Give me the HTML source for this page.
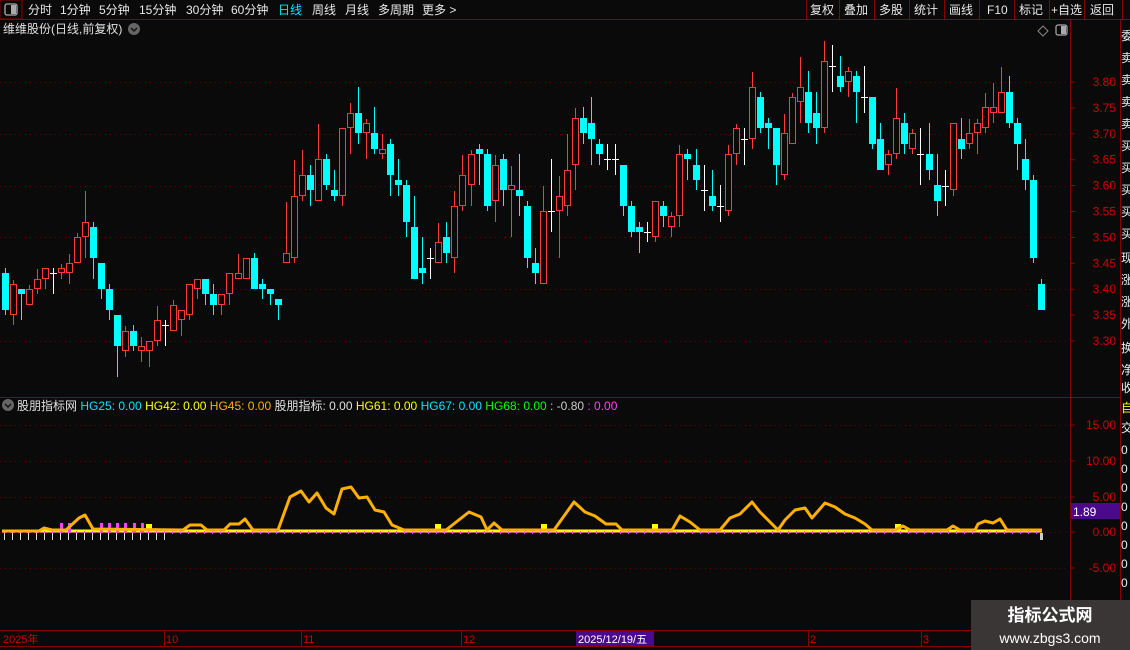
<!DOCTYPE html>
<html><head><meta charset="utf-8">
<style>
html,body{margin:0;padding:0;background:#0a0a0a;width:1130px;height:650px;overflow:hidden;font-family:"Liberation Sans","Noto Sans CJK SC",sans-serif;}
svg{position:absolute;left:0;top:0}
text{font-family:"Liberation Sans","Noto Sans CJK SC",sans-serif}
</style></head><body>
<svg id="s" width="1130" height="650" xmlns="http://www.w3.org/2000/svg">
<rect width="1130" height="650" fill="#0a0a0a"/>
<!-- top bar -->
<line x1="0" y1="19.5" x2="1130" y2="19.5" stroke="#8b0000"/>
<rect x="0" y="0" width="22" height="19" fill="none" stroke="#8b0000"/>
<rect x="5" y="4" width="12" height="11" rx="2" fill="none" stroke="#aaa" stroke-width="1.3"/>
<rect x="11" y="5" width="5" height="9" fill="#aaa"/>
<g font-size="12" fill="#e8e8e8">
<text x="28" y="14">分时</text><text x="60" y="14">1分钟</text><text x="99" y="14">5分钟</text>
<text x="139" y="14">15分钟</text><text x="186" y="14">30分钟</text><text x="231" y="14">60分钟</text>
<text x="278" y="14" fill="#00e5ff">日线</text><text x="312" y="14">周线</text><text x="345" y="14">月线</text>
<text x="378" y="14">多周期</text><text x="422" y="14">更多 &gt;</text>
</g>
<g stroke="#8b0000"><line x1="806.5" y1="0" x2="806.5" y2="19"/><line x1="839.5" y1="0" x2="839.5" y2="19"/><line x1="874.5" y1="0" x2="874.5" y2="19"/><line x1="909.5" y1="0" x2="909.5" y2="19"/><line x1="944.5" y1="0" x2="944.5" y2="19"/><line x1="979.5" y1="0" x2="979.5" y2="19"/><line x1="1014.5" y1="0" x2="1014.5" y2="19"/><line x1="1049.5" y1="0" x2="1049.5" y2="19"/><line x1="1084.5" y1="0" x2="1084.5" y2="19"/><line x1="1122.5" y1="0" x2="1122.5" y2="19"/></g>
<g font-size="12" fill="#e8e8e8">
<text x="810" y="14">复权</text><text x="844" y="14">叠加</text><text x="879" y="14">多股</text><text x="914" y="14">统计</text><text x="949" y="14">画线</text><text x="987" y="14">F10</text><text x="1019" y="14">标记</text><text x="1051" y="14">+自选</text><text x="1090" y="14">返回</text>
</g>
<!-- header -->
<text x="3" y="33" font-size="12" fill="#e0e0e0">维维股份(日线,前复权)</text>
<circle cx="134" cy="29" r="6" fill="#666"/><path d="M131 28 L134 31 L137 28" stroke="#111" stroke-width="1.5" fill="none"/>
<path d="M1043 26 L1048 31 L1043 36 L1038 31 Z" fill="none" stroke="#888"/>
<rect x="1056" y="25" width="11" height="10" rx="2" fill="none" stroke="#aaa" stroke-width="1.2"/><rect x="1061" y="26" width="5" height="8" fill="#aaa"/>
<!-- frames -->
<line x1="1070.5" y1="20" x2="1070.5" y2="646" stroke="#8b0000"/>
<line x1="1120.5" y1="20" x2="1120.5" y2="650" stroke="#8b0000"/>
<line x1="0" y1="397.5" x2="1120" y2="397.5" stroke="#8b0000"/>
<line x1="0" y1="630.5" x2="1120" y2="630.5" stroke="#8b0000"/>
<line x1="0" y1="646.5" x2="1120" y2="646.5" stroke="#8b0000"/>
<g id="grid" stroke="#6a0000" stroke-dasharray="1 4"></g>
<g id="axis" font-size="12" fill="#d00000"></g>
<g id="cand"></g>
<!-- indicator header -->
<circle cx="8" cy="405" r="6" fill="#666"/><path d="M5 404 L8 407 L11 404" stroke="#111" stroke-width="1.5" fill="none"/>
<text x="17" y="410" font-size="12"><tspan fill="#e0e0e0">股朋指标网 </tspan><tspan fill="#00e5ff">HG25: 0.00 </tspan><tspan fill="#ffff00">HG42: 0.00 </tspan><tspan fill="#ffb000">HG45: 0.00 </tspan><tspan fill="#e0e0e0">股朋指标: 0.00 </tspan><tspan fill="#ffff00">HG61: 0.00 </tspan><tspan fill="#00e5ff">HG67: 0.00 </tspan><tspan fill="#00ff00">HG68: 0.00 </tspan><tspan fill="#cccccc"> : -0.80 </tspan><tspan fill="#ff40ff"> : 0.00</tspan></text>
<g id="ind"></g>
<rect x="1071" y="503" width="49" height="16" fill="#4b0a8c"/>
<text x="1073" y="516" font-size="12" fill="#fff">1.89</text>
<!-- right column -->
<g font-size="12" fill="#eee">
<text x="1121" y="40">委</text><text x="1121" y="62">卖</text><text x="1121" y="84">卖</text><text x="1121" y="106">卖</text><text x="1121" y="128">卖</text><text x="1121" y="150">买</text><text x="1121" y="172">买</text><text x="1121" y="194">买</text><text x="1121" y="216">买</text><text x="1121" y="238">买</text><text x="1121" y="262">现</text><text x="1121" y="284">涨</text><text x="1121" y="306">涨</text><text x="1121" y="328">外</text><text x="1121" y="352">换</text><text x="1121" y="374">净</text><text x="1121" y="392">收</text>
<text x="1121" y="412" fill="#ffff00">自</text><text x="1121" y="432">交</text>
<text x="1121" y="454">0</text><text x="1121" y="473">0</text><text x="1121" y="492">0</text><text x="1121" y="511">0</text><text x="1121" y="530">0</text><text x="1121" y="549">0</text><text x="1121" y="568">0</text><text x="1121" y="587">0</text>
</g>
<!-- bottom axis -->
<g stroke="#8b0000"><line x1="164.5" y1="630" x2="164.5" y2="646"/><line x1="301.5" y1="630" x2="301.5" y2="646"/><line x1="461.5" y1="630" x2="461.5" y2="646"/><line x1="808.5" y1="630" x2="808.5" y2="646"/><line x1="921.5" y1="630" x2="921.5" y2="646"/></g>
<g font-size="11" fill="#d00000">
<text x="3" y="643">2025年</text><text x="166" y="643">10</text><text x="303" y="643">11</text><text x="463" y="643">12</text><text x="810" y="643">2</text><text x="923" y="643">3</text>
</g>
<rect x="576" y="631" width="78" height="15" fill="#4b0a8c"/>
<text x="578" y="643" font-size="11" fill="#fff">2025/12/19/五</text>
<!-- watermark -->
<rect x="971" y="600" width="159" height="50" fill="#3a3636"/>
<text x="1050" y="621" font-size="17" font-weight="bold" fill="#fff" text-anchor="middle">指标公式网</text>
<text x="1050" y="643" font-size="14" fill="#fff" text-anchor="middle">www.zbgs3.com</text>
</svg>
<script>
var NS="http://www.w3.org/2000/svg";
function el(p,t,a){var e=document.createElementNS(NS,t);for(var k in a)e.setAttribute(k,a[k]);p.appendChild(e);return e;}
var g=document.getElementById('grid'),ax=document.getElementById('axis'),cd=document.getElementById('cand'),ind=document.getElementById('ind');
[82,134,186,237,289,341,425,461,497,532,568].forEach(function(y){el(g,'line',{x1:0,y1:y+.5,x2:1068,y2:y+.5});});
var pl=['3.80','3.75','3.70','3.65','3.60','3.55','3.50','3.45','3.40','3.35','3.30'];
pl.forEach(function(p,i){var y=82+i*25.9;el(ax,'line',{x1:1070,y1:y,x2:1075,y2:y,stroke:'#8b0000'});var t=el(ax,'text',{x:1116,y:y+4,'text-anchor':'end'});t.textContent=p;});
[['15.00',425],['10.00',461],['5.00',497],['0.00',532],['-5.00',568]].forEach(function(a){el(ax,'line',{x1:1070,y1:a[1],x2:1075,y2:a[1],stroke:'#8b0000'});var t=el(ax,'text',{x:1116,y:a[1]+4,'text-anchor':'end'});t.textContent=a[0];});
// candles: type(r=red hollow,c=cyan,w=cross), bodyTop, bodyBot, hi, lo
var C=[
['c',273,310,268,315],['r',284,315,280,325],['c',289,294,289,320],['r',289,305,285,305],['r',279,289,269,294],['r',268,279,268,289],['w',273,273,268,294],['r',268,273,264,279],['r',263,273,254,284],['r',237,263,233,263],
['r',222,237,191,258],['c',227,258,222,279],['c',263,289,263,299],['c',289,310,284,320],['c',315,346,315,377],['r',331,351,326,357],['c',331,346,325,351],['r',346,351,337,362],['r',341,351,341,367],['r',320,341,306,346],
['w',325,325,320,346],['r',305,331,300,331],['r',310,320,310,336],['r',284,315,284,320],['r',279,289,279,299],['c',279,294,279,305],['c',294,305,284,315],['r',294,305,294,315],['r',273,294,273,305],['r',273,279,254,279],
['r',258,279,258,279],['c',258,289,253,289],['c',284,289,279,299],['c',289,294,289,305],['c',299,305,299,320],['r',253,263,202,263],['r',196,258,160,263],['r',175,196,150,201],['c',175,190,165,206],['r',159,201,124,201],
['c',159,185,154,190],['c',190,196,170,201],['r',128,196,128,206],['r',113,128,103,154],['c',113,133,87,144],['r',123,133,119,159],['c',133,149,107,154],['r',149,154,134,159],['c',144,175,139,196],['c',180,185,159,196],
['c',185,222,180,237],['c',227,279,196,279],['c',268,273,237,284],['w',258,258,248,279],['r',242,263,223,263],['c',237,253,222,263],['r',206,258,191,273],['r',175,206,155,211],['r',154,185,150,206],['c',149,154,144,185],
['c',154,206,149,211],['r',165,201,155,222],['c',159,190,154,206],['r',185,190,166,237],['c',190,196,154,216],['c',206,258,201,268],['c',263,273,248,284],['r',211,284,186,284],['w',211,211,159,232],['r',196,211,176,258],
['r',170,206,134,216],['r',118,165,108,190],['c',118,133,107,144],['c',123,139,97,165],['c',144,154,139,165],['w',159,159,144,170],['w',159,159,144,175],['c',165,206,165,216],['c',206,232,201,237],['c',227,232,222,253],
['w',232,232,222,242],['r',201,237,201,242],['c',206,216,201,227],['r',216,227,212,237],['r',154,216,145,227],['c',154,159,149,180],['c',165,180,149,190],['w',190,190,165,211],['c',196,206,170,211],['w',206,206,185,222],
['r',154,211,145,216],['r',128,154,124,165],['w',139,139,128,165],['r',87,139,72,149],['c',97,128,92,133],['c',123,128,118,149],['c',128,165,128,185],['r',133,175,114,180],['r',97,144,93,144],['r',87,102,57,123],
['c',92,123,71,133],['c',113,128,92,144],['r',61,128,41,133],['w',66,66,45,92],['c',76,87,56,92],['r',71,82,67,97],['c',76,92,71,123],['w',97,97,66,113],['c',97,144,97,149],['c',139,170,123,170],
['r',154,165,150,175],['r',118,154,88,159],['c',123,144,113,154],['r',133,149,129,154],['w',154,154,128,185],['c',154,170,123,180],['c',185,201,154,216],['w',186,186,170,206],['r',123,190,123,196],['c',139,149,118,159],
['r',133,144,119,149],['r',123,133,119,154],['r',107,128,93,133],['r',107,113,83,123],['r',92,113,67,113],['c',92,123,76,128],['c',123,144,118,170],['c',159,180,139,190],['c',180,258,175,263],['c',284,310,279,310]
];
C.forEach(function(c,i){
 var x=Math.round(4.5+i*8.035),t=c[0];
 var col=t=='r'?'#ff3a3a':t=='c'?'#00ffff':'#ffffff';
 el(cd,'line',{x1:x+.5,y1:c[3],x2:x+.5,y2:c[4],stroke:col});
 if(t=='c')el(cd,'rect',{x:x-3,y:c[1],width:7,height:Math.max(2,c[2]-c[1]),fill:col});
 else if(t=='r')el(cd,'rect',{x:x-2.5,y:c[1]+.5,width:6,height:Math.max(1,c[2]-c[1]-1),fill:'#0a0a0a',stroke:col});
 else el(cd,'line',{x1:x-3,y1:c[1]+.5,x2:x+4,y2:c[1]+.5,stroke:col});
});
// indicator
el(ind,'line',{x1:2,y1:531,x2:1042,y2:531,stroke:'#ffff00','stroke-width':3});
for(var x=4;x<1042;x+=8){el(ind,'line',{x1:x-1.5,y1:532.5,x2:x+2.5,y2:532.5,stroke:'#ff40ff'});el(ind,'line',{x1:x+.5,y1:531,x2:x+.5,y2:534,stroke:'#ff40ff'});}
for(var x=4;x<166;x+=8){el(ind,'line',{x1:x+.5,y1:533,x2:x+.5,y2:540,stroke:'#ddd'});}
el(ind,'rect',{x:1040,y:533,width:3,height:7,fill:'#ccc'});
[60,68,100,108,116,124,133,141].forEach(function(x){el(ind,'rect',{x:x,y:523,width:3,height:9,fill:'#ff40ff'});});
[149,438,544,655,898].forEach(function(x){el(ind,'rect',{x:x-3,y:524,width:6,height:7,fill:'#ffff00'});});
var P=[[2,531],[39,531],[44,528],[52,530],[66,530],[79,518],[85,515],[93,529],[183,530],[190,525],[201,525],[207,530],[224,530],[230,524],[239,524],[245,519],[253,530],[278,530],[290,497],[301,491],[309,502],[317,493],[326,508],[334,514],[342,489],[351,487],[359,498],[367,497],[375,510],[384,512],[392,525],[404,530],[446,530],[469,512],[481,517],[487,530],[494,523],[502,530],[554,530],[574,502],[585,512],[595,516],[606,524],[616,524],[622,530],[672,530],[680,516],[690,522],[700,530],[720,530],[730,518],[740,514],[752,502],[760,512],[770,522],[778,530],[785,520],[795,510],[805,508],[812,518],[825,503],[835,507],[845,514],[855,518],[865,524],[872,530],[895,530],[903,526],[910,530],[947,530],[953,526],[960,530],[975,530],[978,524],[985,521],[993,523],[1000,519],[1007,530],[1042,530]];
el(ind,'polyline',{points:P.map(function(p){return p.join(',')}).join(' '),fill:'none',stroke:'#ffb000','stroke-width':3,'stroke-linejoin':'round'});
</script>
</body></html>
